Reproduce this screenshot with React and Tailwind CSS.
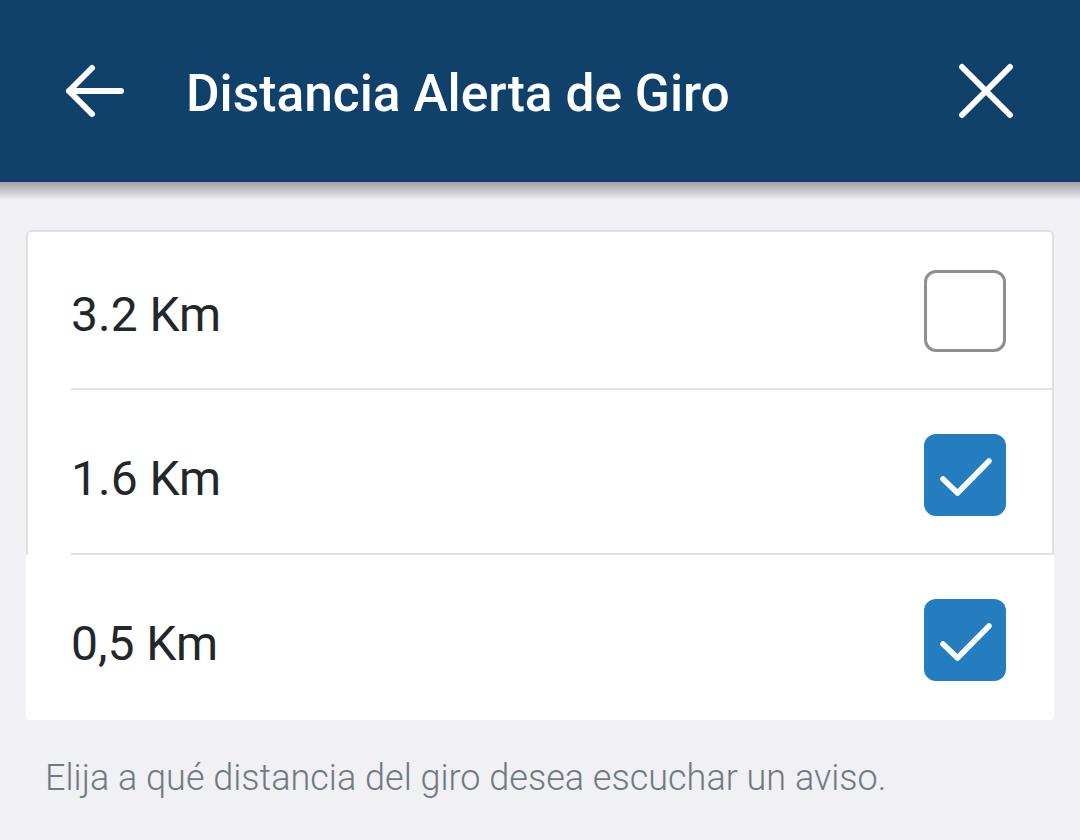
import React from "react";

function Check({ checked }) {
  if (!checked) {
    return <div className="w-[82px] h-[82px] rounded-[12px] border-[3px] border-[#8e8e93] bg-white" />;
  }
  return (
    <div className="w-[82px] h-[82px] rounded-[12px] bg-[#237dbf]">
      <svg width="82" height="82" viewBox="0 0 82 82" fill="none">
        <path d="M19 45 L33.5 59 L65 27" stroke="white" strokeWidth="5.5" strokeLinecap="round" strokeLinejoin="round" />
      </svg>
    </div>
  );
}

function Row({ label, checked, height, divider }) {
  return (
    <div className={`relative flex items-center pl-[43px] pr-[46px] ${height}`}>
      <span className="flex-1 text-[48px] text-[#22272b] leading-none pt-[8px]">{label}</span>
      <Check checked={checked} />
      {divider && <div className="absolute left-[43px] right-0 bottom-0 h-[2px] bg-[#e0e0e6]" />}
    </div>
  );
}

export default function App() {
  return (
    <div className="w-[1080px] h-[840px] bg-[#f0f0f5] overflow-hidden" style={{ fontFamily: "Roboto, 'Liberation Sans', sans-serif" }}>
      <div className="h-[182px] bg-[#0f416b] flex items-center">
        <div className="w-[186px] flex items-center pl-[63px]">
          <svg width="62" height="60" viewBox="0 0 62 60" fill="none">
            <path d="M58 30 H6 M29 7 L6 30 L29 53" stroke="white" strokeWidth="6" strokeLinecap="round" strokeLinejoin="round" />
          </svg>
        </div>
        <h1 className="flex-1 text-white text-[51.5px] font-medium leading-none pt-[6px]">Distancia Alerta de Giro</h1>
        <div className="pr-[66px]">
          <svg width="56" height="56" viewBox="0 0 56 56" fill="none">
            <path d="M4 4 L52 52 M52 4 L4 52" stroke="white" strokeWidth="6" strokeLinecap="round" />
          </svg>
        </div>
      </div>
      <div className="h-[18px] bg-gradient-to-b from-[#a2a2a6] to-[#f0f0f5]" />
      <div className="mt-[30px] mx-[26px]">
        <div className="bg-white border-[2px] border-b-0 border-[#dfdfe6] rounded-t-[6px]">
          <Row label="3.2 Km" checked={false} height="h-[158px]" divider />
          <Row label="1.6 Km" checked height="h-[165px] pt-[5px]" divider />
        </div>
        <div className="bg-white rounded-b-[4px]">
          <div className="h-[165px] flex items-center pl-[45px] pr-[48px] pt-[5px]">
            <span className="flex-1 text-[48px] text-[#22272b] leading-none pt-[8px]">0,5 Km</span>
            <Check checked />
          </div>
        </div>
      </div>
      <p className="mt-[40px] pl-[45px] text-[36px] font-light text-[#6f7a80] leading-none">Elija a qué distancia del giro desea escuchar un aviso.</p>
    </div>
  );
}
